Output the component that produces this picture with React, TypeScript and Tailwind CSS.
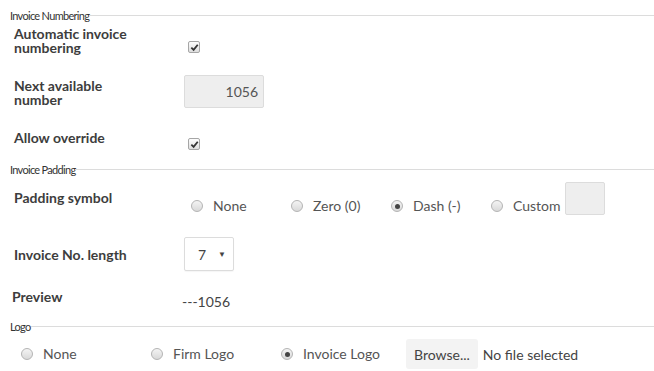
import type { ReactNode } from "react";

function Legend({ children }: { children: string }) {
  return (
    <div className="flex items-center h-[18px] pl-[10px]">
      <span className="text-[11px] tracking-[-0.7px] leading-none text-[#333]">{children}</span>
      <div className="flex-1 h-px bg-[#dcdcdc]" />
    </div>
  );
}

function Checkbox() {
  return (
    <span className="flex items-center justify-center size-[12px] rounded-[2px] border border-[#a6a6a6] bg-gradient-to-b from-[#fdfdfd] to-[#dedede]">
      <svg viewBox="0 0 10 10" className="size-[9px]">
        <path d="M1.5 5.2 L4 7.6 L8.6 2" fill="none" stroke="#333" strokeWidth="2" />
      </svg>
    </span>
  );
}

function Radio({ checked = false }: { checked?: boolean }) {
  return (
    <span className="flex items-center justify-center size-[12px] shrink-0 rounded-full border border-[#b4b4b4] bg-gradient-to-b from-[#f4f4f4] to-[#d9d9d9]">
      {checked && <span className="size-[5px] rounded-full bg-[#444]" />}
    </span>
  );
}

function Label({ children, className }: { children: ReactNode; className?: string }) {
  return (
    <div className={"w-[184px] shrink-0 pl-[14px] " + (className ?? "")}>
      <div className="max-w-[130px] font-bold leading-[14px] text-[#3d3d3d]">{children}</div>
    </div>
  );
}

export default function App() {
  return (
    <div className="w-[654px] h-[371px] bg-white pt-[6px] font-['Lato','Liberation_Sans',sans-serif] text-[14px] text-[#555] overflow-hidden">
      <Legend>Invoice Numbering</Legend>

      {/* Automatic numbering */}
      <div className="flex h-[46px]">
        <Label className="pt-[3px]">Automatic invoice numbering</Label>
        <div className="pt-[17px] pl-[4px]">
          <Checkbox />
        </div>
      </div>

      {/* Next number */}
      <div className="flex h-[48px]">
        <Label className="pt-[9px]">Next available number</Label>
        <div className="pt-[5px]">
          <div className="w-[80px] h-[33px] rounded-[2px] border border-[#dcdcdc] bg-[#eee] flex items-center justify-end pr-[5px] text-[#555]">
            1056
          </div>
        </div>
      </div>

      {/* Allow override */}
      <div className="flex h-[42px]">
        <Label className="pt-[13px]">Allow override</Label>
        <div className="pt-[20px] pl-[4px]">
          <Checkbox />
        </div>
      </div>

      <Legend>Invoice Padding</Legend>

      {/* Padding symbol */}
      <div className="flex h-[48px]">
        <Label className="pt-[13px]">Padding symbol</Label>
        <div className="flex items-start pt-[4px]">
          {[
            { label: "None", checked: false },
            { label: "Zero (0)", checked: false },
            { label: "Dash (-)", checked: true },
          ].map((o) => (
            <div key={o.label} className="w-[100px] flex items-center gap-[10px] pl-[7px] mt-[17px] leading-[14px]">
              <Radio checked={o.checked} />
              <span>{o.label}</span>
            </div>
          ))}
          <div className="flex items-start pl-[7px]">
            <div className="flex items-center gap-[10px] mt-[17px] leading-[14px]">
              <Radio />
              <span>Custom</span>
            </div>
            <div className="ml-[4px] w-[40px] h-[33px] rounded-[2px] border border-[#dcdcdc] bg-[#eee]" />
          </div>
        </div>
      </div>

      {/* Length */}
      <div className="flex h-[56px]">
        <Label className="pt-[22px]">Invoice No. length</Label>
        <div className="pt-[11px]">
          <div className="w-[50px] h-[34px] rounded-[2px] border border-[#dcdcdc] bg-white shadow-[0_1px_1px_rgba(0,0,0,0.04)] flex items-center pl-[13px] pr-[7px] justify-between text-[#444]">
            <span>7</span>
            <span className="text-[8px] text-[#444]">▼</span>
          </div>
        </div>
      </div>

      {/* Preview */}
      <div className="flex h-[35px]">
        <div className="w-[182px] shrink-0 pl-[12px] pt-[8px] font-bold leading-[14px] text-[#3d3d3d]">Preview</div>
        <div className="pt-[13px] leading-[14px] text-[#444]">---1056</div>
      </div>

      <Legend>Logo</Legend>

      {/* Logo choice */}
      <div className="flex items-center h-[34px] mt-[2px]">
        {[
          { label: "None", checked: false },
          { label: "Firm Logo", checked: false },
          { label: "Invoice Logo", checked: true },
        ].map((o) => (
          <div key={o.label} className="w-[130px] flex items-center gap-[10px] pl-[21px] leading-[14px]">
            <Radio checked={o.checked} />
            <span>{o.label}</span>
          </div>
        ))}
        <div className="ml-[16px] h-[30px] px-[8px] rounded-[3px] bg-[#f3f3f3] flex items-center text-[#444]">
          Browse...
        </div>
        <span className="ml-[5px] text-[#444]">No file selected</span>
      </div>
    </div>
  );
}
